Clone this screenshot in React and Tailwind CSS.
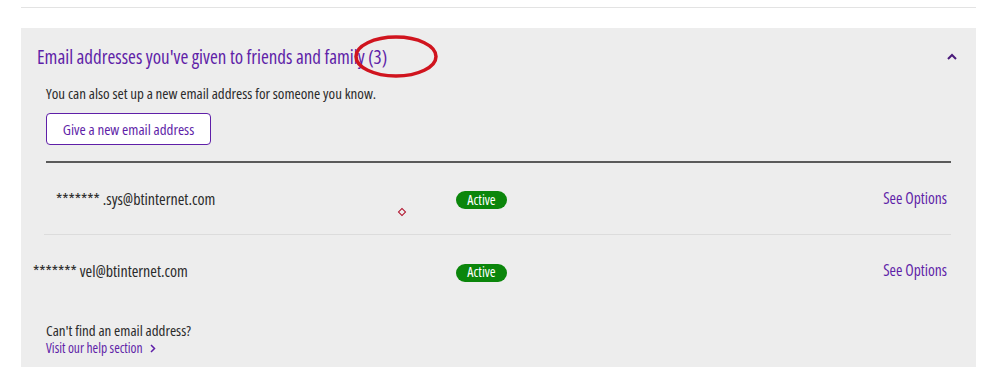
import React from "react";

const font = { fontFamily: '"Open Sans", "Liberation Sans", sans-serif' };

function Badge() {
  return (
    <span className="inline-flex items-center justify-center w-[51px] h-[18px] rounded-full bg-[#0b860b] text-white text-[14px] leading-none pb-[1px]">
      Active
    </span>
  );
}

function Row({ email, shift, height }) {
  return (
    <div className={`grid grid-cols-[410px_1fr_auto] items-center ${height} pr-[4px]`}>
      <div className={`${shift} text-[16px] text-[#2b2b2b]`}>{email}</div>
      <div><Badge /></div>
      <a className="text-[15.5px] text-[#5f1fa8]">See Options</a>
    </div>
  );
}

export default function App() {
  return (
    <div className="w-[999px] h-[387px] bg-white relative overflow-hidden font-stretch-condensed" style={font}>
      <div className="pt-[7px] pl-[21px] w-[976px]">
        <div className="h-px bg-[#e3e3e3]" />
      </div>
      <div className="mt-[20px] ml-[21px] w-[955px] h-[339px] bg-[#ededed] flex flex-col">
        <div className="h-[58px] flex items-center justify-between pl-[16px] pr-[18px] pt-[1px]">
          <h2 className="text-[19px] text-[#5f1fa8]">Email addresses you've given to friends and family (3)</h2>
          <svg width="12" height="8" viewBox="0 0 12 8" className="mt-[-2px]">
            <path d="M2 6 L6 2 L10 6" fill="none" stroke="#4a1a7a" strokeWidth="2" />
          </svg>
        </div>
        <div className="pl-[25px] pr-[25px] flex flex-col">
          <p className="text-[15px] text-[#2b2b2b] leading-[16px] mt-[-1px]">You can also set up a new email address for someone you know.</p>
          <button className="mt-[12px] w-[165px] h-[32px] bg-white border border-[#5f1fa8] rounded-[4px] text-[15px] text-[#5f1fa8]">
            Give a new email address
          </button>
          <div className="mt-[16px] h-[2px] bg-[#5a5a5a]" />
          <Row email="******* .sys@btinternet.com" shift="pl-[10px]" height="h-[71px]" />
          <div className="h-px bg-[#dcdcdc] ml-[-2px]" />
          <Row email="******* vel@btinternet.com" shift="ml-[-13px]" height="h-[72px]" />
          <p className="mt-[14px] text-[15px] text-[#2b2b2b] leading-[18px]">Can't find an email address?</p>
          <a className="text-[13.5px] text-[#5f1fa8] leading-[18px] flex items-center gap-[7px]">
            Visit our help section
            <svg width="6" height="9" viewBox="0 0 6 9">
              <path d="M1 1 L4.5 4.5 L1 8" fill="none" stroke="#5f1fa8" strokeWidth="1.5" />
            </svg>
          </a>
        </div>
      </div>
      <svg className="absolute left-[352px] top-[34px]" width="88" height="46" viewBox="0 0 88 46">
        <ellipse cx="44" cy="22.5" rx="40" ry="19.5" fill="none" stroke="#d0141e" strokeWidth="3.5" />
      </svg>
      <div className="absolute left-[399px] top-[209px] w-[6px] h-[6px] rotate-45 border-[1.5px] border-[#b0102a]" />
    </div>
  );
}
